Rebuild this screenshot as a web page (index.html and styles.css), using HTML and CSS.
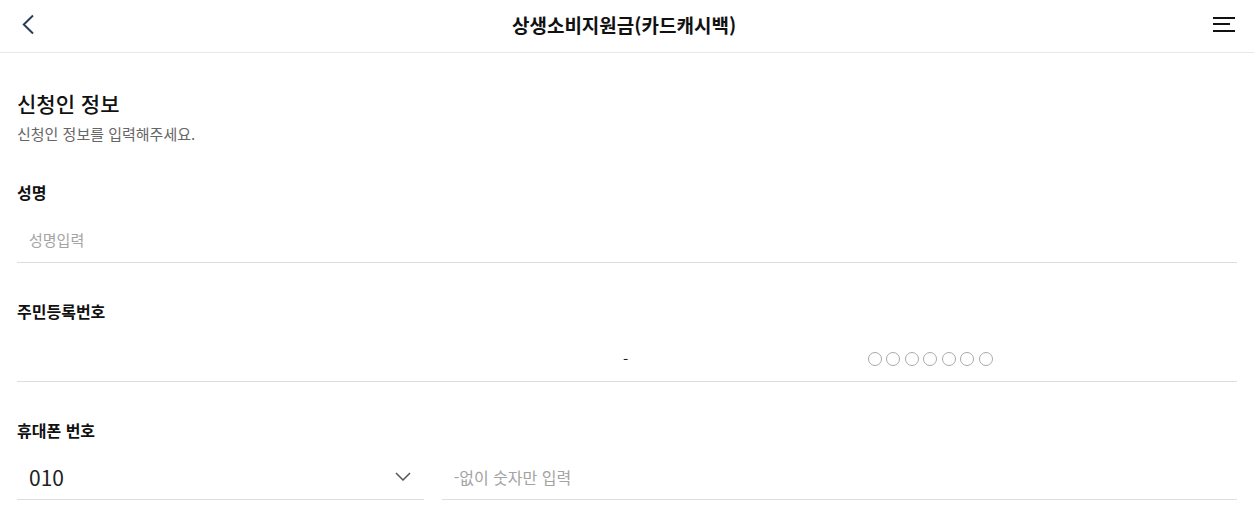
FILE: index.html
```html
<!DOCTYPE html>
<html lang="ko">
<head>
<meta charset="utf-8">
<title>상생소비지원금(카드캐시백)</title>
<link rel="stylesheet" href="styles.css">
</head>
<body>
<header class="topbar">
  <button class="icon-btn back" aria-label="뒤로">
    <svg width="14" height="21" viewBox="0 0 14 21"><path d="M12 1.5 L2.8 10.5 L12 19.5" fill="none" stroke="#2c3e5a" stroke-width="2"/></svg>
  </button>
  <h1 class="title">상생소비지원금(카드캐시백)</h1>
  <button class="icon-btn menu" aria-label="메뉴">
    <svg width="24" height="18" viewBox="0 0 24 18"><rect x="0" y="1" width="22" height="2" fill="#111"/><rect x="0" y="7" width="17" height="2" fill="#111"/><rect x="0" y="14" width="22" height="2" fill="#111"/></svg>
  </button>
</header>
<main class="content">
  <section class="section-head">
    <h2 class="section-title">신청인 정보</h2>
    <p class="section-desc">신청인 정보를 입력해주세요.</p>
  </section>

  <div class="field">
    <label class="label">성명</label>
    <div class="input-row">
      <span class="placeholder">성명입력</span>
    </div>
  </div>

  <div class="field">
    <label class="label">주민등록번호</label>
    <div class="input-row jumin">
      <span class="jumin-front"></span>
      <span class="dash">-</span>
      <span class="jumin-back">
        <i class="dot"></i><i class="dot"></i><i class="dot"></i><i class="dot"></i><i class="dot"></i><i class="dot"></i><i class="dot"></i>
      </span>
    </div>
  </div>

  <div class="field field-phone">
    <label class="label">휴대폰 번호</label>
    <div class="phone">
      <div class="input-row select">
        <span class="select-value">010</span>
        <svg class="caret" width="16" height="9" viewBox="0 0 16 9"><path d="M1 1 L8 8 L15 1" fill="none" stroke="#555" stroke-width="1.5"/></svg>
      </div>
      <div class="input-row phone-input">
        <span class="placeholder wide">-없이 숫자만 입력</span>
      </div>
    </div>
  </div>
</main>
</body>
</html>
```
FILE: styles.css
```css
* { box-sizing: border-box; }
html, body { margin: 0; padding: 0; background: #fff; }
body {
  font-family: "Noto Sans CJK KR", "Noto Sans", sans-serif;
  color: #111;
}
.topbar {
  height: 53px;
  border-bottom: 1px solid #e8e8e8;
  display: flex;
  align-items: center;
  justify-content: space-between;
  padding: 0 17px 0 21px;
}
.icon-btn {
  border: 0;
  background: none;
  padding: 0;
  display: flex;
  align-items: center;
}
.back { margin-top: -4px; }
.menu { margin-top: -3px; }
.title {
  margin: 0;
  font-size: 19px;
  font-weight: 600;
  line-height: 24px;
  margin-top: -2px;
  color: #111;
}
.content { padding: 0 17px; }
.section-head { padding-top: 35px; margin-bottom: 36px; }
.section-title {
  margin: 0;
  font-size: 21px;
  font-weight: 500;
  line-height: 30px;
}
.section-desc {
  margin: 6px 0 0;
  font-size: 15px;
  line-height: 20px;
  color: #666;
}
.field { margin-bottom: 36px; }
.label {
  display: block;
  font-size: 16px;
  font-weight: 700;
  line-height: 24px;
  margin-bottom: 13px;
}
.field-phone .label { margin-bottom: 12px; }
.input-row {
  height: 46px;
  border-bottom: 1px solid #dedede;
  display: flex;
  align-items: center;
  padding: 0 12px;
}
.placeholder { font-size: 15px; color: #a3a3a3; }
.placeholder.wide { font-size: 16px; }
.jumin { padding: 0; }
.jumin-front { flex: 1; }
.dash { width: 10px; padding-left: 3px; text-align: center; font-size: 15px; color: #222; }
.jumin-back {
  flex: 1;
  display: flex;
  justify-content: center;
  gap: 4.5px;
  padding-right: 6px;
}
.dot {
  width: 14px;
  height: 14px;
  border: 1px solid #aaa;
  border-radius: 50%;
}
.phone { display: flex; gap: 18px; }
.select { width: 33.333%; justify-content: space-between; padding-right: 13px; }
.select-value { font-size: 21px; color: #222; }
.phone-input { flex: 1; }
```
